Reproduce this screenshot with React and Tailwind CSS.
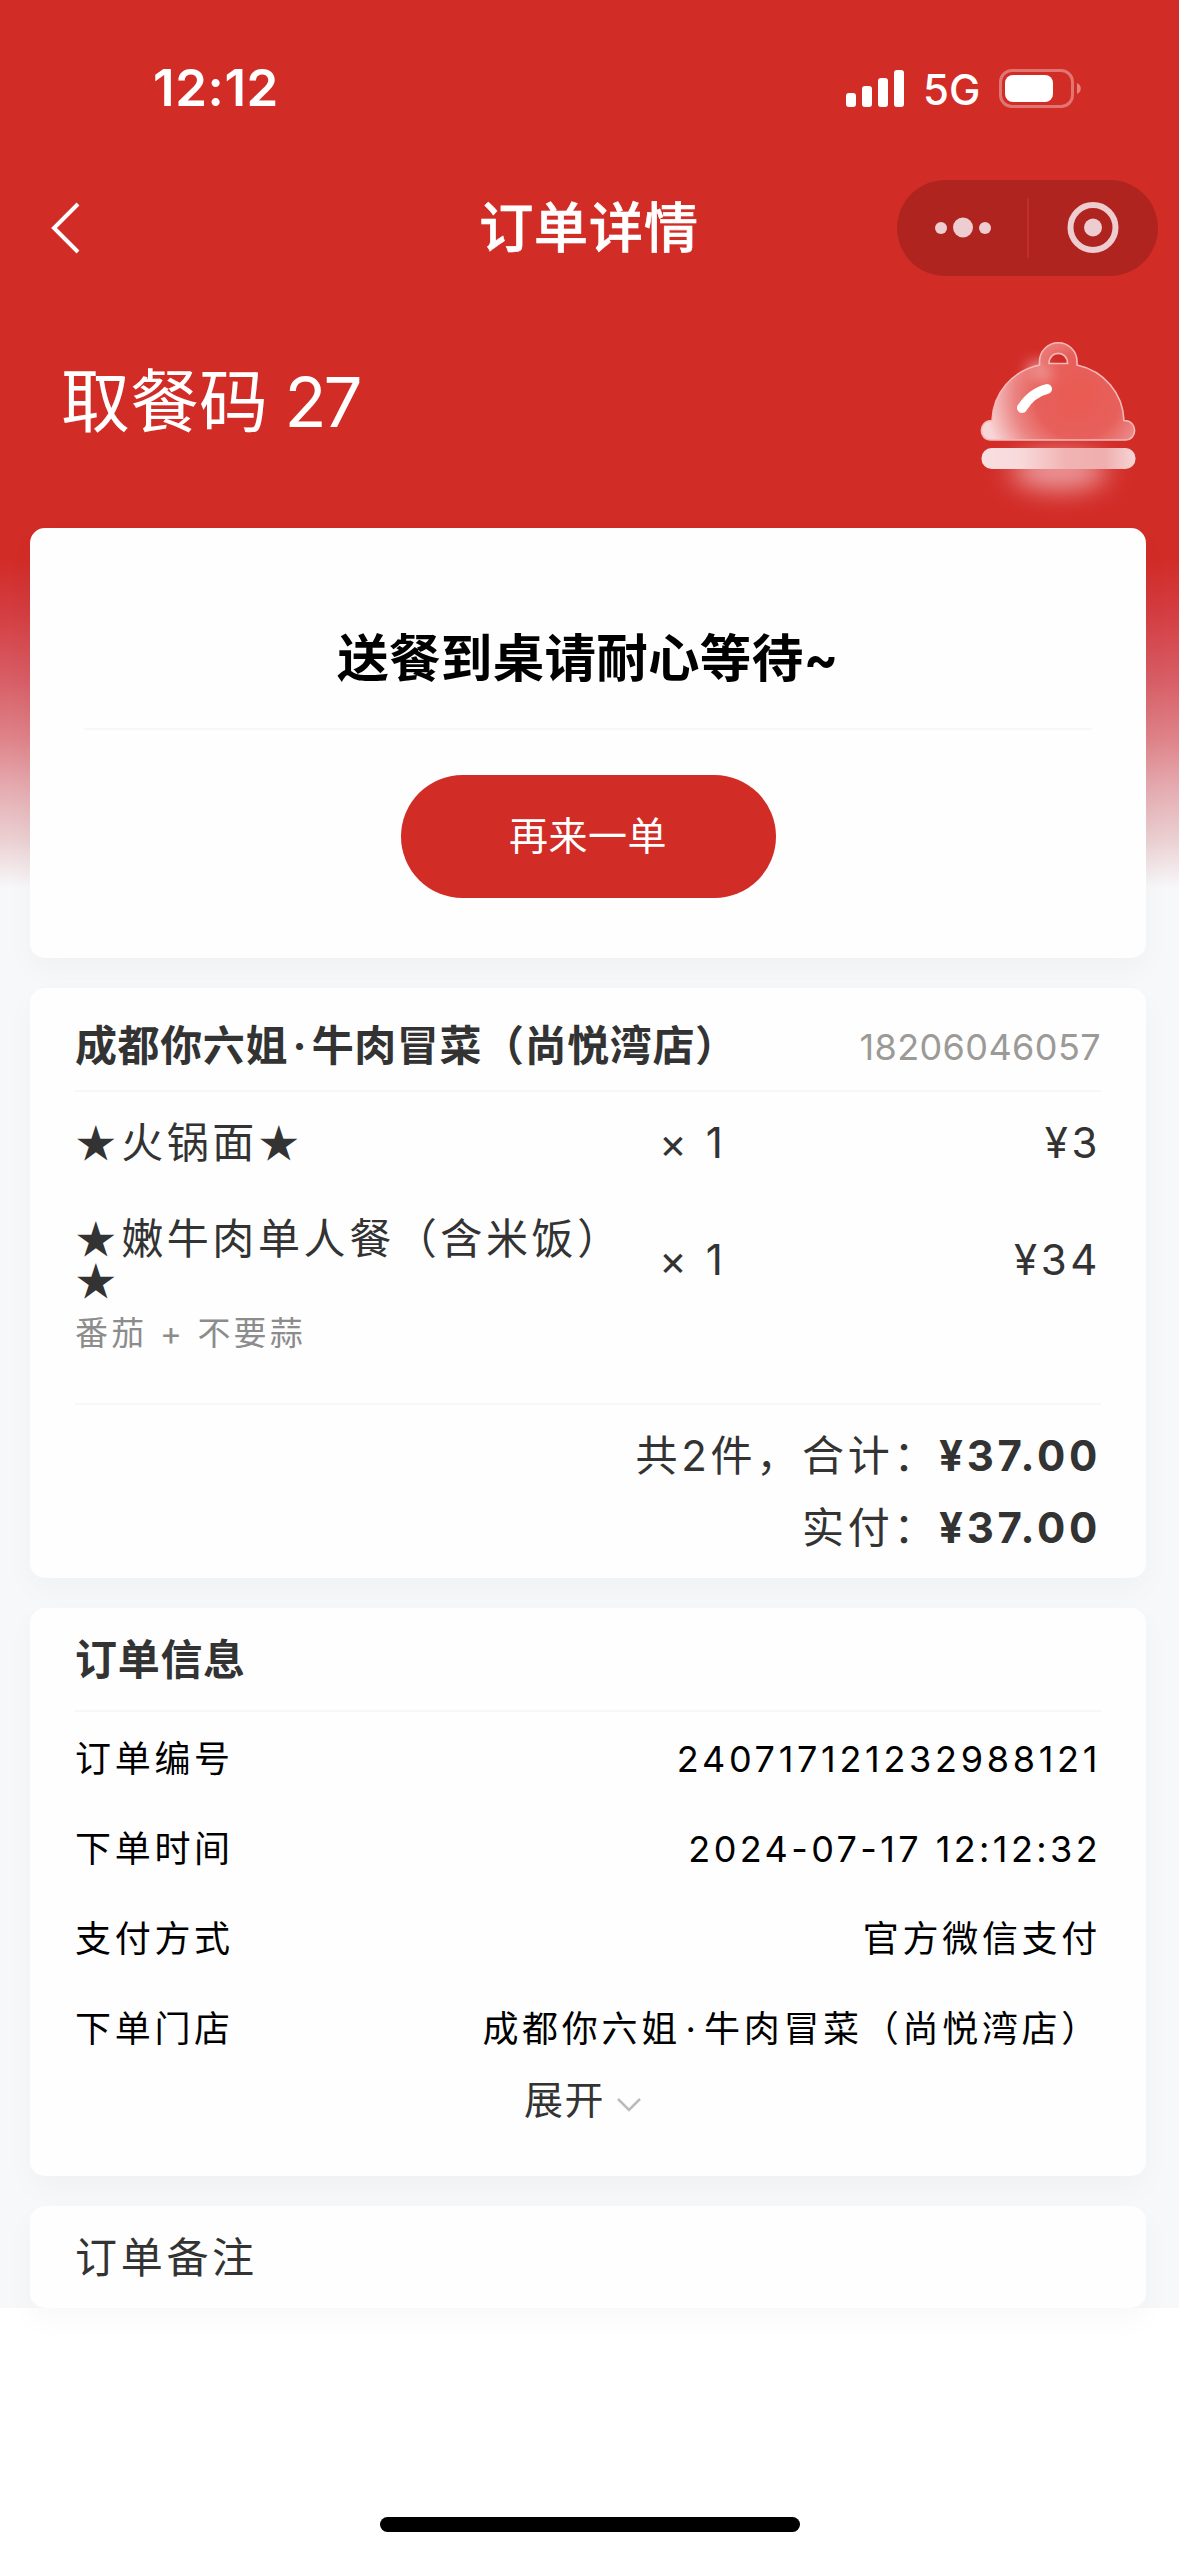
import React from "react";

const items = [
  { name: "★火锅面★", count: 1, price: "¥3" },
  { name: "★嫩牛肉单人餐（含米饭）★", count: 1, price: "¥34", options: "番茄 + 不要蒜" },
];

const shopName = "成都你六姐·牛肉冒菜（尚悦湾店）";

const orderInfo = [
  { label: "订单编号", value: "240717121232988121" },
  { label: "下单时间", value: "2024-07-17 12:12:32", className: "tracking-[3.4px]" },
  { label: "支付方式", value: "官方微信支付" },
  { label: "下单门店", value: shopName },
];

// stars are a bit heavier than the text, the middle dot needs some air
const RichText = ({ text }) =>
  text.split(/([★·])/).map((part, i) => {
    if (part === "★") {
      return (
        <span key={i} className="ml-[2px] text-[36px] leading-[0px] tracking-[6.5px] [-webkit-text-stroke:2px_#333]">
          ★
        </span>
      );
    }
    if (part === "·") {
      return (
        <span key={i} className="px-[4.5px]">
          ·
        </span>
      );
    }
    return part;
  });

const StatusBar = () => (
  <div className="flex h-[168px] items-start justify-between pt-[57px] pr-[98px] pl-[153px] text-white">
    <span className="text-[51px] leading-[62px] font-semibold tracking-[0.6px]">12:12</span>
    <div className="flex h-[62px] items-center">
      <svg width="58" height="37" viewBox="0 0 58 37" fill="currentColor">
        <rect x="0" y="23" width="10" height="14" rx="3" />
        <rect x="16" y="16" width="10" height="21" rx="3" />
        <rect x="32" y="8" width="10" height="29" rx="3" />
        <rect x="48" y="0" width="10" height="37" rx="3" />
      </svg>
      <span className="mt-[3px] ml-[19px] w-[56px] text-[42px] leading-[62px] font-medium">5G</span>
      <svg className="ml-[20px]" width="82" height="39" viewBox="0 0 82 39">
        <rect x="1.5" y="1.5" width="72" height="36" rx="11.5" fill="none" stroke="#fff" strokeOpacity="0.35" strokeWidth="3" />
        <rect x="6" y="6" width="48" height="27" rx="8" fill="#fff" />
        <path d="M78 14c5 2 5 9 0 11z" fill="#fff" fillOpacity="0.4" />
      </svg>
    </div>
  </div>
);

const NavBar = () => (
  <div className="grid h-[120px] grid-cols-3 items-center pr-[21px] pl-[50px]">
    <svg width="30" height="52" viewBox="0 0 30 52" fill="none" stroke="#fff" strokeWidth="4">
      <path d="M28 2L4 26L28 50" />
    </svg>
    <h1 className="mt-[2px] -ml-[30px] text-center text-[54px] leading-[60px] font-medium tracking-[0.9px] text-white [-webkit-text-stroke:0.7px_#fff]">
      订单详情
    </h1>
    <div className="flex h-24 w-[261px] items-center justify-self-end rounded-full bg-[#b02420]">
      <svg width="261" height="96" viewBox="0 0 261 96" fill="#eecdd0">
        <circle cx="44" cy="48" r="6" />
        <circle cx="66" cy="47.5" r="10" />
        <circle cx="88" cy="48" r="6" />
        <rect x="130" y="18" width="2" height="60" fill="#bd302d" />
        <circle cx="196" cy="47.5" r="22.5" fill="none" stroke="#eecdd0" strokeWidth="6" />
        <circle cx="196" cy="47.5" r="9" />
      </svg>
    </div>
  </div>
);

const BellIcon = () => (
  <svg width="200" height="220" viewBox="0 0 200 220" className="overflow-visible">
    <defs>
      <radialGradient id="dome" gradientUnits="userSpaceOnUse" cx="118" cy="86" r="94">
        <stop offset="0" stopColor="#e95a52" />
        <stop offset="0.45" stopColor="#e7605b" />
        <stop offset="0.68" stopColor="#eb8583" />
        <stop offset="1" stopColor="#f8d6d7" />
      </radialGradient>
      <linearGradient id="plate" x1="0" y1="0" x2="1" y2="0">
        <stop offset="0" stopColor="#f9dfe0" />
        <stop offset="0.25" stopColor="#f8dadb" />
        <stop offset="0.55" stopColor="#f1b3b3" />
        <stop offset="0.8" stopColor="#f0aeae" />
        <stop offset="1" stopColor="#f7d5d6" />
      </linearGradient>
      <filter id="glow" x="-60%" y="-150%" width="220%" height="400%">
        <feGaussianBlur stdDeviation="13" />
      </filter>
      <filter id="soft" x="-80%" y="-80%" width="260%" height="260%">
        <feGaussianBlur stdDeviation="7" />
      </filter>
    </defs>
    <ellipse cx="99" cy="160" rx="48" ry="19" fill="#f0a6aa" fillOpacity="0.9" filter="url(#glow)" />
    <circle cx="76" cy="60" r="10" fill="#f0b0b0" fillOpacity="0.6" filter="url(#soft)" />
    <path
      d="M32 109.500C33 82 52 60 79.500 54V50.500a18.750 18.750 0 0 1 37.500 0V54C144 60 163 82 164 109.500C178 109.500 178 129 165 129H31C18 129 18 109.500 32 109.500zM89 52.500H107.500C107.500 39 89 39 89 52.500z"
      fill="url(#dome)"
      fillRule="evenodd"
      stroke="#f6b9b9"
      strokeWidth="1.6"
    />
    <circle cx="82" cy="62" r="9" fill="#f6c6c6" fillOpacity="0.6" filter="url(#soft)" />
    <rect x="21.500" y="137" width="154" height="21" rx="10" fill="url(#plate)" />
    <path d="M62 97C67 89 75 81 87 78" fill="none" stroke="#fff" strokeWidth="10" strokeLinecap="round" />
  </svg>
);

const Card = ({ className = "", children }) => (
  <section className={"rounded-[15px] bg-[#fefefe] shadow-[0_12px_30px_rgba(0,0,0,0.03)] " + className}>{children}</section>
);

const App = () => {
  return (
    <div className="flex min-h-[2556px] w-[1179px] flex-col bg-white font-[Inter,'Noto_Sans_CJK_SC',sans-serif] text-[#333]">
      <div className="h-[2308px] bg-[#f7f8fa] bg-[linear-gradient(180deg,#d22c27_0px,#d22c27_560px,#d43c40_610px,#d85e66_680px,#df848a_740px,#e5adb2_790px,#ebd0d2_840px,#f7f8fa_888px)]">
        <StatusBar />
        <NavBar />

        <div className="flex h-[240px] items-start justify-between pr-[19px] pl-[61px]">
          <p className="mt-[74px] text-[69px] leading-[80px] whitespace-nowrap text-white">
            取餐码<span className="tracking-[-3px]"> 27</span>
          </p>
          <div className="h-[220px] w-[200px] pt-[23px]">
            <BellIcon />
          </div>
        </div>

        <div className="flex w-[1146px] flex-col gap-[30px] pl-[30px]">
          <Card className="flex h-[430px] flex-col items-center px-[54px]">
            <h2 className="mt-[100px] text-[51.500px] leading-[60px] font-bold tracking-[0.3px] text-black">送餐到桌请耐心等待~</h2>
            <div className="mt-[40px] h-[2px] w-full bg-[#f7f7f7]" />
            <button className="mt-[45px] h-[123px] w-[375px] rounded-full bg-[#d22c27] text-[39px] tracking-[0.5px] text-white">再来一单</button>
          </Card>

          <Card className="h-[590px] px-[45px]">
            <div className="flex h-[104px] items-center justify-between border-b-2 border-[#f7f7f7] pt-[14px]">
              <h3 className="text-[42px] leading-[44px] font-bold tracking-[0.6px]">
                <RichText text={shopName} />
              </h3>
              <span className="mt-[2px] text-[36px] leading-[44px] tracking-[0.4px] text-[#9b9a96]">18206046057</span>
            </div>
            <div className="flex h-[311px] flex-col gap-[54px] pt-[30px] text-[42px] leading-[42px] tracking-[3.6px]">
              {items.map((item) => (
                <div key={item.name}>
                  <div className="flex items-center">
                    <span className="w-[584px] pr-[20px]">
                      <RichText text={item.name} />
                    </span>
                    <span className="flex-1">× {item.count}</span>
                    <span>{item.price}</span>
                  </div>
                  {item.options && <p className="mt-[12px] text-[33px] leading-[38px] tracking-[3.2px] text-[#8c8c8c]">{item.options}</p>}
                </div>
              ))}
            </div>
            <div className="border-t-2 border-[#f7f7f7] pt-[15px] text-right text-[42px] leading-[72px] tracking-[3.7px]">
              <p>
                共2件，合计：<b>¥37.00</b>
              </p>
              <p>
                实付：<b>¥37.00</b>
              </p>
            </div>
          </Card>

          <Card className="h-[568px] px-[45px]">
            <h3 className="h-[104px] border-b-2 border-[#f7f7f7] pt-[29px] text-[42px] leading-[46px] font-bold tracking-[0.7px]">订单信息</h3>
            <div className="pt-[2px] text-[36px] leading-[90px] tracking-[3.7px] text-black">
              {orderInfo.map((row) => (
                <div key={row.label} className="flex justify-between">
                  <span>{row.label}</span>
                  <span className={row.className}>
                    <RichText text={row.value} />
                  </span>
                </div>
              ))}
            </div>
            <div className="-mt-[1px] flex items-center pl-[449px]">
              <span className="text-[39px] leading-[54px] tracking-[1.500px]">展开</span>
              <svg className="mt-[10px] ml-[11px]" width="26" height="16" viewBox="0 0 26 16" fill="none" stroke="#bbb" strokeWidth="2.5">
                <path d="M2 2L13 13L24 2" />
              </svg>
            </div>
          </Card>

          <Card className="h-[102px] px-[45px]">
            <p className="text-[42px] leading-[103px] tracking-[3.7px]">订单备注</p>
          </Card>
        </div>
      </div>

      <div className="flex h-[248px] items-end justify-center pb-[24px]">
        <div className="h-[15px] w-[420px] rounded-full bg-black" />
      </div>
    </div>
  );
};

export default App;
